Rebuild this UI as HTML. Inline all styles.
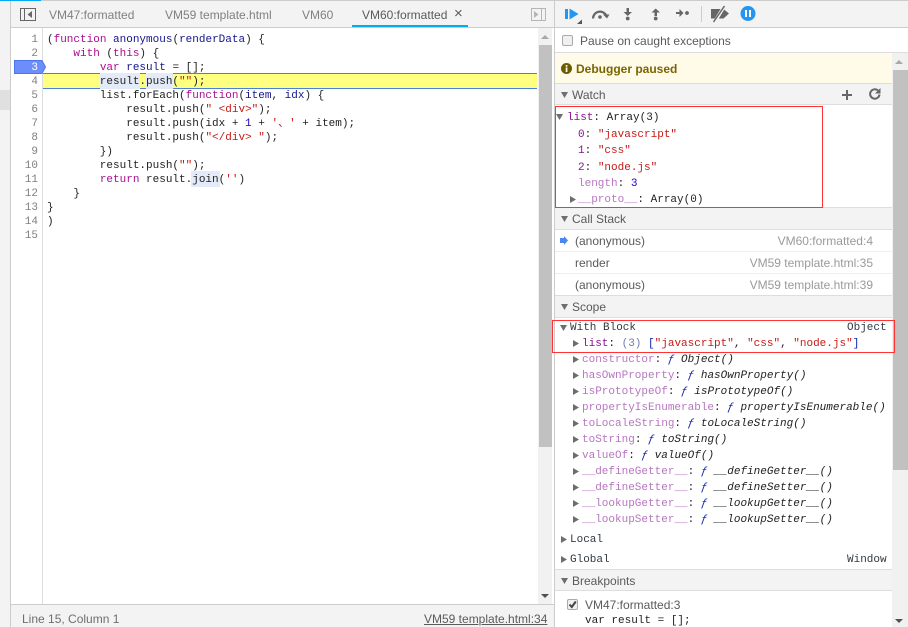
<!DOCTYPE html>
<html><head><meta charset="utf-8"><style>
html,body{margin:0;padding:0;background:#fff}
#r{position:relative;width:908px;height:627px;overflow:hidden;background:#fff;font-family:"Liberation Sans",sans-serif;font-size:12px;color:#333}
#r div,#r svg{position:absolute}
.b{background:#ccc}
.h{background:#f3f3f3}
.l{background:#ddd}
.m,.n,.s{white-space:pre;line-height:14px;height:14px}
.m{font-family:"Liberation Mono","Noto Sans CJK SC",monospace;font-size:11px;color:#222}
.n{font-family:"Liberation Mono",monospace;font-size:11px;color:#808080;width:28px;text-align:right;left:10px}
.s{font-size:12px;color:#5a5a5a}
.g{color:#808080}
i{font-style:normal}
.k{color:#aa0d91}.d{color:#15158c}.v{color:#c41a16}.c{color:#1c00cf}.p{color:#881391}.q{color:#b776c0}.f{color:#0d22aa}
.it{font-style:italic}
.red{border:1px solid #f33;box-sizing:border-box}
</style></head><body><div id="r">
<!-- left strip -->
<div style="left:0;top:0;width:10px;height:627px;background:#f3f3f3"></div>
<div style="left:0;top:90px;width:10px;height:20px;background:#e0e0e0"></div>
<div class="b" style="left:10px;top:0;width:1px;height:627px"></div>
<div class="b" style="left:41px;top:0;width:867px;height:1px"></div>
<div style="left:0;top:0;width:41px;height:1px;background:#03a9f4"></div>
<!-- tabs -->
<div class="h" style="left:11px;top:1px;width:543px;height:26px"></div>
<div class="b" style="left:11px;top:27px;width:543px;height:1px"></div>
<svg style="left:20px;top:8px" width="16" height="13" viewBox="0 0 16 13"><rect x=".5" y=".5" width="15" height="12" fill="none" stroke="#666"/><rect x="4" y="1" width="1" height="11" fill="#666"/><path d="M12 3v7L7.5 6.5z" fill="#666"/></svg>
<div class="s g" style="left:49px;top:8px">VM47:formatted</div>
<div class="s g" style="left:165px;top:8px">VM59 template.html</div>
<div class="s g" style="left:302px;top:8px">VM60</div>
<div class="s" style="left:362px;top:8px">VM60:formatted</div>
<div class="s" style="left:454px;top:7px;font-size:15px">×</div>
<div style="left:352px;top:25px;width:116px;height:2px;background:#03a9f4"></div>
<svg style="left:531px;top:8px" width="15" height="13" viewBox="0 0 15 13"><rect x=".5" y=".5" width="14" height="12" fill="none" stroke="#b5b5b5"/><rect x="10" y="1" width="1" height="11" fill="#b5b5b5"/><path d="M3 3v7l4.5-3.500z" fill="#b5b5b5"/></svg>
<!-- gutter -->
<div class="l" style="left:42px;top:28px;width:1px;height:576px"></div>
<!-- highlights -->
<div style="left:43px;top:73px;width:494px;height:16px;background:#ffff80;border-top:1px solid #4a7fe0;border-bottom:1px solid #4a7fe0;box-sizing:border-box"></div>
<div style="left:100px;top:73px;width:40px;height:16px;background:#e4ebf8"></div>
<div style="left:146px;top:73px;width:27px;height:16px;background:#e4ebf8"></div>
<div style="left:191px;top:171px;width:29px;height:16px;background:#e4ebf8"></div>
<!-- breakpoint marker -->
<svg style="left:14px;top:60px" width="33" height="14" viewBox="0 0 33 14"><path d="M.5.5H28L31.5 7 28 13.5H.5z" fill="#6d8dfb" stroke="#4a76e8"/></svg>
<!-- line numbers -->
<div class="n" style="top:33px">1</div><div class="n" style="top:47px">2</div><div class="n" style="top:61px;color:#fff">3</div><div class="n" style="top:75px">4</div><div class="n" style="top:89px">5</div><div class="n" style="top:103px">6</div><div class="n" style="top:117px">7</div><div class="n" style="top:131px">8</div><div class="n" style="top:145px">9</div><div class="n" style="top:159px">10</div><div class="n" style="top:173px">11</div><div class="n" style="top:187px">12</div><div class="n" style="top:201px">13</div><div class="n" style="top:215px">14</div><div class="n" style="top:229px">15</div>
<!-- code -->
<div class="m" style="left:47px;top:33px">(<i class="k">function</i> <i class="d">anonymous</i>(<i class="d">renderData</i>) {</div>
<div class="m" style="left:47px;top:47px">    <i class="k">with</i> (<i class="k">this</i>) {</div>
<div class="m" style="left:47px;top:61px">        <i class="k">var</i> <i class="d">result</i> = [];</div>
<div class="m" style="left:47px;top:75px">        result.push(<i class="v">""</i>);</div>
<div class="m" style="left:47px;top:89px">        list.forEach(<i class="k">function</i>(<i class="d">item</i>, <i class="d">idx</i>) {</div>
<div class="m" style="left:47px;top:103px">            result.push(<i class="v">" &lt;div&gt;"</i>);</div>
<div class="m" style="left:47px;top:117px">            result.push(idx + <i class="c">1</i> + <i class="v">'、'</i> + item);</div>
<div class="m" style="left:47px;top:131px">            result.push(<i class="v">"&lt;/div&gt; "</i>);</div>
<div class="m" style="left:47px;top:145px">        })</div>
<div class="m" style="left:47px;top:159px">        result.push(<i class="v">""</i>);</div>
<div class="m" style="left:47px;top:173px">        <i class="k">return</i> result.join(<i class="v">''</i>)</div>
<div class="m" style="left:47px;top:187px">    }</div>
<div class="m" style="left:47px;top:201px">}</div>
<div class="m" style="left:47px;top:215px">)</div>
<!-- left scrollbar -->
<div style="left:538px;top:28px;width:14px;height:576px;background:#f1f1f1"></div>
<div style="left:539px;top:45px;width:13px;height:402px;background:#c1c1c1"></div>
<svg style="left:541px;top:34px" width="9" height="6"><path d="M0 5 4 1 8 5z" fill="#a8a8a8"/></svg>
<svg style="left:541px;top:593px" width="9" height="6"><path d="M0 1 4 5 8 1z" fill="#505050"/></svg>
<!-- status bar -->
<div class="h" style="left:11px;top:605px;width:543px;height:22px"></div>
<div class="b" style="left:11px;top:604px;width:543px;height:1px"></div>
<div class="s" style="left:22px;top:612px;color:#6e6e6e">Line 15, Column 1</div>
<div class="s" style="left:424px;top:612px;text-decoration:underline">VM59 template.html:34</div>
<!-- divider -->
<div class="b" style="left:554px;top:0;width:1px;height:627px"></div>
<!-- toolbar -->
<div class="h" style="left:555px;top:1px;width:353px;height:26px"></div>
<div class="b" style="left:555px;top:27px;width:353px;height:1px"></div>
<svg style="left:555px;top:0" width="210" height="27" viewBox="555 0 210 27">
<rect x="565" y="9" width="3" height="10" fill="#2196f3"/><path d="M569.5 8.500 578.500 14l-9 5.500z" fill="#2196f3"/><path d="M582 19.500V24h-5z" fill="#555"/>
<path d="M593 18.500a7 7 0 0 1 13-3.500" fill="none" stroke="#666" stroke-width="2.200"/><path d="M603 14.500h6.500l-2.500 4z" fill="#666"/><circle cx="600" cy="17" r="1.800" fill="#666"/>
<path d="M626.500 8h2.500v4h3l-4.300 4-4.200-4h3z" fill="#666"/><circle cx="627.700" cy="18.500" r="1.900" fill="#666"/>
<path d="M655.700 8.500l4.300 4h-3v3.500h-2.500v-3.500h-3z" fill="#666"/><circle cx="655.700" cy="18.500" r="1.900" fill="#666"/>
<path d="M676 12h3.500v-3l4 4-4 4v-3H676z" fill="#666"/><circle cx="687" cy="13" r="1.900" fill="#666"/>
<rect x="701" y="6" width="1" height="16" fill="#ccc"/>
<path d="M711 9h12.500l5.500 4.500-5.500 5H711z" fill="#666"/><path d="M714 23 725 5" stroke="#f3f3f3" stroke-width="3.500"/><path d="M713.500 22 724.500 6" stroke="#666" stroke-width="1.500"/>
<circle cx="748" cy="13.500" r="7.500" fill="#2196f3"/><rect x="745" y="10" width="2" height="7" fill="#fff"/><rect x="749" y="10" width="2" height="7" fill="#fff"/>
</svg>
<!-- pause row -->
<div style="left:562px;top:35px;width:9px;height:9px;border:1px solid #aaa;border-radius:2px;background:#f0f0f0"></div>
<div class="s" style="left:580px;top:34px">Pause on caught exceptions</div>
<div class="l" style="left:555px;top:52px;width:353px;height:1px"></div>
<!-- debugger paused -->
<div style="left:555px;top:53px;width:337px;height:30px;background:#fffbe8"></div>
<div class="l" style="left:555px;top:83px;width:337px;height:1px"></div>
<svg style="left:561px;top:63px" width="11" height="11" viewBox="0 0 11 11"><circle cx="5.500" cy="5.500" r="5.500" fill="#6b5c00"/><rect x="4.700" y="2" width="1.700" height="1.700" fill="#fff"/><rect x="4.700" y="4.500" width="1.700" height="4.500" fill="#fff"/></svg>
<div class="s" style="left:576px;top:62px;font-weight:bold;color:#7a6400">Debugger paused</div>
<!-- right scrollbar -->
<div style="left:892px;top:53px;width:16px;height:574px;background:#f1f1f1"></div>
<div style="left:893px;top:70px;width:15px;height:400px;background:#c1c1c1"></div>
<svg style="left:895px;top:59px" width="9" height="6"><path d="M0 5 4 1 8 5z" fill="#a8a8a8"/></svg>
<svg style="left:895px;top:618px" width="9" height="6"><path d="M0 1 4 5 8 1z" fill="#505050"/></svg>
<!-- watch header -->
<div class="h" style="left:555px;top:84px;width:337px;height:20px"></div>
<div class="l" style="left:555px;top:104px;width:337px;height:1px"></div>
<svg style="left:561px;top:92px" width="7" height="6"><path d="M0 0h7L3.500 6z" fill="#6e6e6e"/></svg>
<div class="s" style="left:572px;top:88px">Watch</div>
<svg style="left:842px;top:90px" width="10" height="10"><path d="M4 0h2v4h4v2H6v4H4V6H0V4h4z" fill="#666"/></svg>
<svg style="left:869px;top:88px" width="12" height="12" viewBox="0 0 12 12"><path d="M10.500 6.500a4.700 4.700 0 1 1-1.500-4" fill="none" stroke="#666" stroke-width="2"/><path d="M11.500 0v5.500H6z" fill="#666"/></svg>
<!-- watch -->
<svg style="left:556px;top:114px" width="7" height="6"><path d="M0 0h7L3.500 6z" fill="#6e6e6e"/></svg>
<div class="m" style="left:567px;top:111px"><i class="p">list</i>: Array(3)</div>
<div class="m" style="left:578px;top:128px"><i class="p">0</i>: <i class="v">"javascript"</i></div>
<div class="m" style="left:578px;top:144px"><i class="p">1</i>: <i class="v">"css"</i></div>
<div class="m" style="left:578px;top:161px"><i class="p">2</i>: <i class="v">"node.js"</i></div>
<div class="m" style="left:578px;top:177px"><i class="q">length</i>: <i class="c">3</i></div>
<svg style="left:570px;top:196px" width="6" height="7"><path d="M0 0v7l6-3.500z" fill="#6e6e6e"/></svg>
<div class="m" style="left:578px;top:193px"><i class="q">__proto__</i>: Array(0)</div>
<!-- call stack -->
<div class="l" style="left:555px;top:207px;width:337px;height:1px"></div>
<div class="h" style="left:555px;top:208px;width:337px;height:21px"></div>
<div class="l" style="left:555px;top:229px;width:337px;height:1px"></div>
<svg style="left:560px;top:236px" width="8" height="9"><path d="M0 2h4V0l4 4.500L4 9V7H0z" fill="#4a86f0"/></svg>
<div class="s" style="left:575px;top:234px">(anonymous)</div>
<div class="s g" style="left:673px;width:200px;top:234px;text-align:right;color:#9a9a9a">VM60:formatted:4</div>
<div style="left:555px;top:251px;width:337px;height:1px;background:#eee"></div>
<div class="s" style="left:575px;top:256px">render</div>
<div class="s g" style="left:673px;width:200px;top:256px;text-align:right;color:#9a9a9a">VM59 template.html:35</div>
<div style="left:555px;top:273px;width:337px;height:1px;background:#eee"></div>
<div class="s" style="left:575px;top:278px">(anonymous)</div>
<div class="s g" style="left:673px;width:200px;top:278px;text-align:right;color:#9a9a9a">VM59 template.html:39</div>
<!-- scope header -->
<div class="l" style="left:555px;top:295px;width:337px;height:1px"></div>
<div class="h" style="left:555px;top:296px;width:337px;height:21px"></div>
<div class="l" style="left:555px;top:317px;width:337px;height:1px"></div>
<svg style="left:561px;top:304px" width="7" height="6"><path d="M0 0h7L3.500 6z" fill="#6e6e6e"/></svg>
<div class="s" style="left:572px;top:300px">Scope</div>
<svg style="left:561px;top:216px" width="7" height="6"><path d="M0 0h7L3.500 6z" fill="#6e6e6e"/></svg>
<div class="s" style="left:572px;top:212px">Call Stack</div>
<!-- scope -->
<svg style="left:560px;top:325px" width="7" height="6"><path d="M0 0h7L3.500 6z" fill="#6e6e6e"/></svg>
<div class="m" style="left:570px;top:321px;color:#303942">With Block</div>
<div class="m" style="left:847px;top:321px;color:#303942">Object</div>
<svg style="left:573px;top:340px" width="6" height="7"><path d="M0 0v7l6-3.500z" fill="#6e6e6e"/></svg>
<div class="m" style="left:582px;top:337px"><i class="p">list</i>: <i style="color:#6a7fa8">(3)</i> <i class="f">[</i><i class="v">"javascript"</i>, <i class="v">"css"</i>, <i class="v">"node.js"</i><i class="f">]</i></div>
<svg style="left:573px;top:356px" width="6" height="7"><path d="M0 0v7l6-3.500z" fill="#6e6e6e"/></svg>
<div class="m" style="left:582px;top:353px"><i class="q">constructor</i>: <i class="f it">ƒ</i> <i class="it">Object()</i></div>
<svg style="left:573px;top:372px" width="6" height="7"><path d="M0 0v7l6-3.500z" fill="#6e6e6e"/></svg>
<div class="m" style="left:582px;top:369px"><i class="q">hasOwnProperty</i>: <i class="f it">ƒ</i> <i class="it">hasOwnProperty()</i></div>
<svg style="left:573px;top:388px" width="6" height="7"><path d="M0 0v7l6-3.500z" fill="#6e6e6e"/></svg>
<div class="m" style="left:582px;top:385px"><i class="q">isPrototypeOf</i>: <i class="f it">ƒ</i> <i class="it">isPrototypeOf()</i></div>
<svg style="left:573px;top:404px" width="6" height="7"><path d="M0 0v7l6-3.500z" fill="#6e6e6e"/></svg>
<div class="m" style="left:582px;top:401px"><i class="q">propertyIsEnumerable</i>: <i class="f it">ƒ</i> <i class="it">propertyIsEnumerable()</i></div>
<svg style="left:573px;top:420px" width="6" height="7"><path d="M0 0v7l6-3.500z" fill="#6e6e6e"/></svg>
<div class="m" style="left:582px;top:417px"><i class="q">toLocaleString</i>: <i class="f it">ƒ</i> <i class="it">toLocaleString()</i></div>
<svg style="left:573px;top:436px" width="6" height="7"><path d="M0 0v7l6-3.500z" fill="#6e6e6e"/></svg>
<div class="m" style="left:582px;top:433px"><i class="q">toString</i>: <i class="f it">ƒ</i> <i class="it">toString()</i></div>
<svg style="left:573px;top:452px" width="6" height="7"><path d="M0 0v7l6-3.500z" fill="#6e6e6e"/></svg>
<div class="m" style="left:582px;top:449px"><i class="q">valueOf</i>: <i class="f it">ƒ</i> <i class="it">valueOf()</i></div>
<svg style="left:573px;top:468px" width="6" height="7"><path d="M0 0v7l6-3.500z" fill="#6e6e6e"/></svg>
<div class="m" style="left:582px;top:465px"><i class="q">__defineGetter__</i>: <i class="f it">ƒ</i> <i class="it">__defineGetter__()</i></div>
<svg style="left:573px;top:484px" width="6" height="7"><path d="M0 0v7l6-3.500z" fill="#6e6e6e"/></svg>
<div class="m" style="left:582px;top:481px"><i class="q">__defineSetter__</i>: <i class="f it">ƒ</i> <i class="it">__defineSetter__()</i></div>
<svg style="left:573px;top:500px" width="6" height="7"><path d="M0 0v7l6-3.500z" fill="#6e6e6e"/></svg>
<div class="m" style="left:582px;top:497px"><i class="q">__lookupGetter__</i>: <i class="f it">ƒ</i> <i class="it">__lookupGetter__()</i></div>
<svg style="left:573px;top:516px" width="6" height="7"><path d="M0 0v7l6-3.500z" fill="#6e6e6e"/></svg>
<div class="m" style="left:582px;top:513px"><i class="q">__lookupSetter__</i>: <i class="f it">ƒ</i> <i class="it">__lookupSetter__()</i></div>
<svg style="left:561px;top:536px" width="6" height="7"><path d="M0 0v7l6-3.500z" fill="#6e6e6e"/></svg>
<div class="m" style="left:570px;top:533px;color:#303942">Local</div>
<svg style="left:561px;top:556px" width="6" height="7"><path d="M0 0v7l6-3.500z" fill="#6e6e6e"/></svg>
<div class="m" style="left:570px;top:553px;color:#303942">Global</div>
<div class="m" style="left:847px;top:553px;color:#303942">Window</div>
<!-- breakpoints -->
<div class="l" style="left:555px;top:569px;width:337px;height:1px"></div>
<div class="h" style="left:555px;top:570px;width:337px;height:20px"></div>
<div class="l" style="left:555px;top:590px;width:337px;height:1px"></div>
<svg style="left:561px;top:578px" width="7" height="6"><path d="M0 0h7L3.500 6z" fill="#6e6e6e"/></svg>
<div class="s" style="left:572px;top:574px">Breakpoints</div>
<div style="left:567px;top:599px;width:9px;height:9px;border:1px solid #aaa;border-radius:2px;background:#f0f0f0"></div>
<svg style="left:567px;top:599px" width="11" height="11"><path d="M2.500 5.500 4.800 8 8.800 2.500" fill="none" stroke="#444" stroke-width="2"/></svg>
<div class="s" style="left:585px;top:598px">VM47:formatted:3</div>
<div class="m" style="left:585px;top:614px">var result = [];</div>
<!-- red boxes -->
<div class="red" style="left:555px;top:106px;width:268px;height:102px"></div>
<div class="red" style="left:552px;top:320px;width:343px;height:33px"></div>
</div></body></html>
